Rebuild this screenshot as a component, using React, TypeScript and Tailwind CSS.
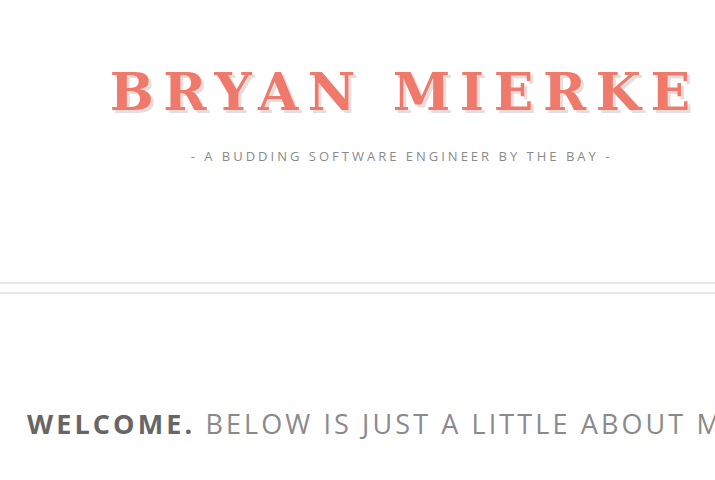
export default function App() {
  return (
    <div className="w-[715px] h-[480px] overflow-hidden bg-white">
      <div className="w-[800px]">
        <header className="pt-[62px] h-[282px] flex flex-col items-center">
          <h1
            className="text-[52px] leading-[60px] font-bold tracking-[9.6px] text-[#ef7a6b] pl-[9.6px] [text-shadow:3px_3px_0_#e6dedc] whitespace-nowrap"
            style={{ fontFamily: '"DejaVu Serif", serif' }}
          >
            BRYAN MIERKE
          </h1>
          <p
            className="mt-[25px] text-[13px] tracking-[3px] text-[#8a8a8a] pl-[3px] whitespace-nowrap"
            style={{ fontFamily: '"Open Sans", sans-serif' }}
          >
            - A BUDDING SOFTWARE ENGINEER BY THE BAY -
          </p>
        </header>
        <div className="h-[2px] bg-[#e5e5e5]" />
        <div className="h-[8px]" />
        <div className="h-[2px] bg-[#e5e5e5]" />
        <section className="pt-[110px] pl-[27px]">
          <p
            className="text-[27px] tracking-[3.1px] whitespace-nowrap text-[#8a8a8a]"
            style={{ fontFamily: '"Open Sans", sans-serif' }}
          >
            <span className="font-bold text-[#666]">WELCOME.</span> BELOW IS JUST A LITTLE ABOUT ME
          </p>
        </section>
      </div>
    </div>
  );
}
